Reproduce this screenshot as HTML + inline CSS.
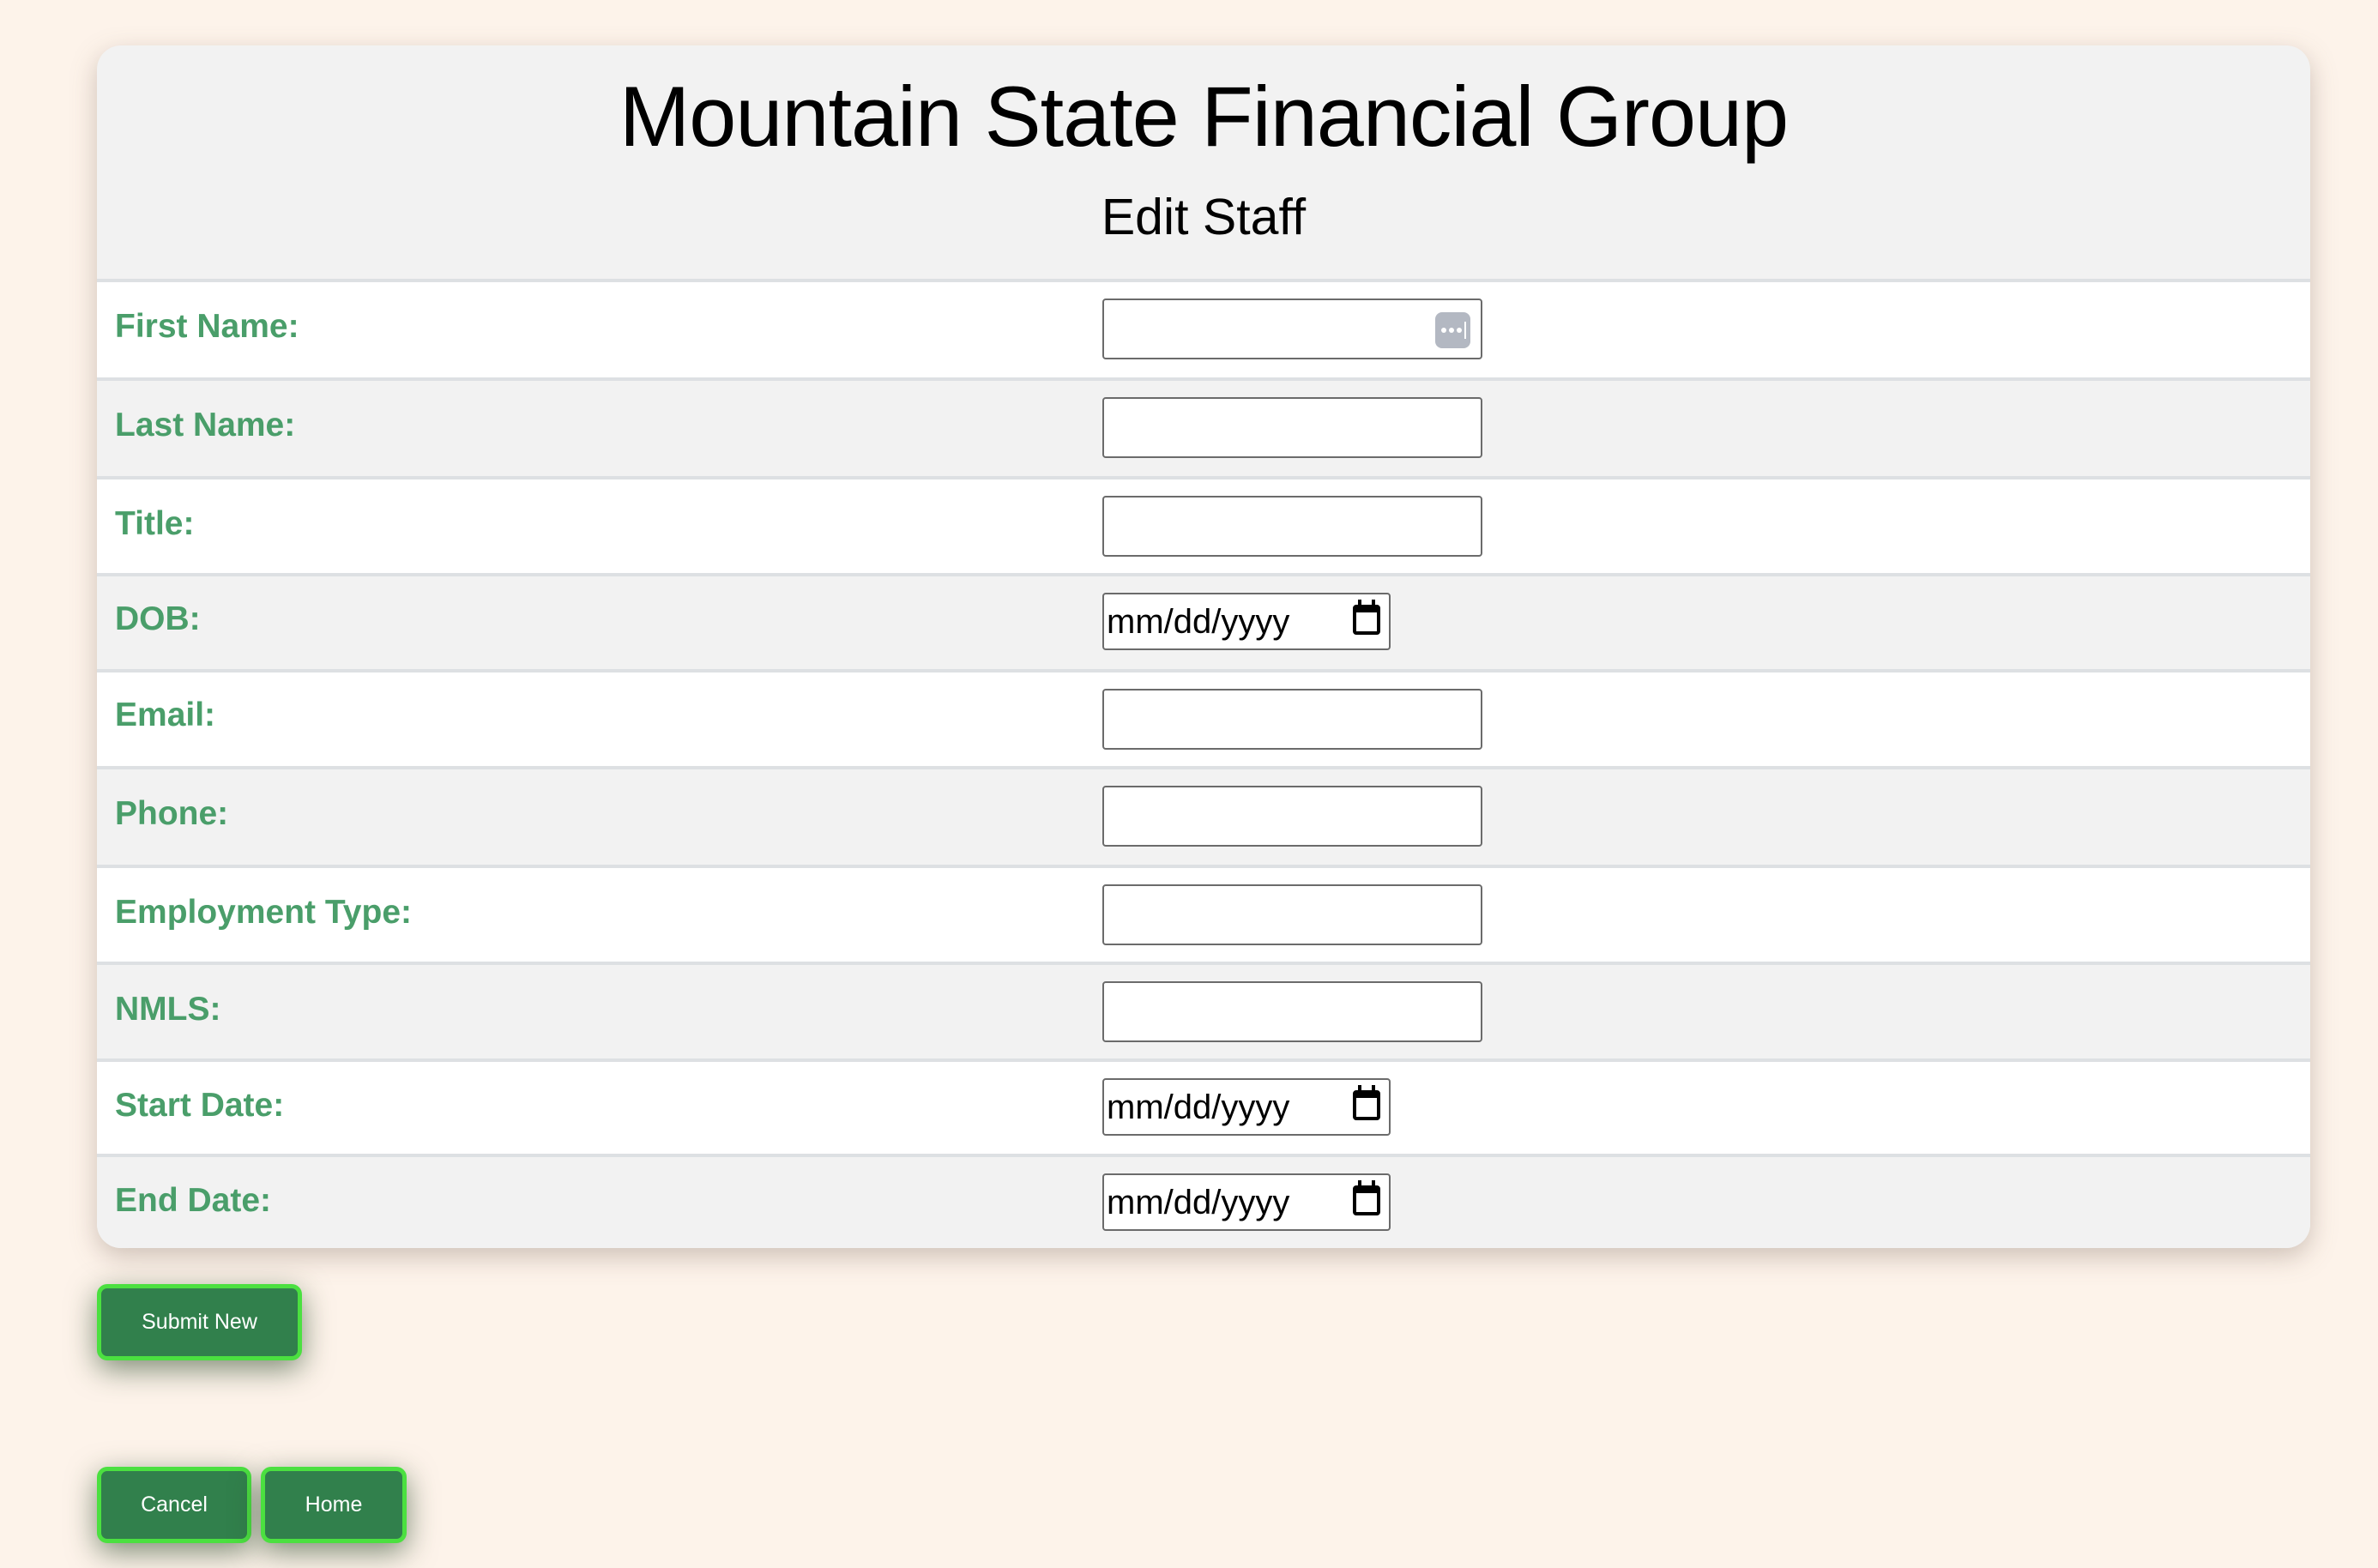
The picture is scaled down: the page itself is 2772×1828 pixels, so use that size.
<!DOCTYPE html>
<html><head><meta charset="utf-8"><style>
*{box-sizing:border-box;margin:0;padding:0}
html,body{width:2772px;height:1828px;overflow:hidden}
body{background:#fdf3ea;font-family:"Liberation Sans",sans-serif;position:relative}
.card{position:absolute;left:113px;top:53px;width:2580px;height:1402px;background:#f2f2f2;border-radius:28px;box-shadow:0 10px 30px rgba(120,100,90,.35);overflow:hidden}
.hdr{height:272px;text-align:center;position:relative}
.h1{position:absolute;left:0;right:0;top:26px;font-size:99px;color:#000;letter-spacing:-1px}
.h2{position:absolute;left:0;right:0;top:166px;font-size:59px;color:#000}
.row{position:absolute;left:0;width:2580px;border-top:4px solid #dde0e3}
.row.w{background:#fff}.row.g{background:#f2f2f2}
.lbl{position:absolute;left:21px;font-weight:bold;font-size:39px;color:#4a9e6a}
.inp{position:absolute;left:1172px;width:443px;height:71px;background:#fff;border:2px solid #6b6b6b;border-radius:4px}
.date{position:absolute;left:1172px;width:336px;height:67px;background:#fff;border:2px solid #6b6b6b;border-radius:4px}
.date span{position:absolute;left:3px;top:10px;font-size:40px;color:#000}
.cal{position:absolute;right:10px;top:12px;width:32px;height:35px;border:4px solid #000;border-top-width:9px;border-radius:4px}
.cal:before,.cal:after{content:"";position:absolute;top:-15px;width:4px;height:8px;background:#000}
.cal:before{left:2px}.cal:after{right:2px}
.key{position:absolute;right:12px;top:14px;width:41px;height:42px;background:#b3b8c2;border-radius:8px}
.key i{position:absolute;top:18px;width:6px;height:6px;border-radius:3px;background:#fff}
.key b{position:absolute;left:34px;top:11px;width:2px;height:20px;background:#fff}
.btn{position:absolute;background:#31804c;border:5px solid #4be040;border-radius:12px;color:#fff;font-size:25px;text-align:center;box-shadow:0 10px 34px rgba(40,70,40,.6)}
</style></head><body>
<div class="card">
<div class="hdr"><div class="h1">Mountain State Financial Group</div><div class="h2">Edit Staff</div></div>

<div class="row w" style="top:272px;height:115px"><div class="lbl" style="top:30px">First Name:</div><div class="inp" style="top:19px"><div class="key"><i style="left:7px"></i><i style="left:16px"></i><i style="left:25px"></i><b></b></div></div></div>
<div class="row g" style="top:387px;height:115px"><div class="lbl" style="top:30px">Last Name:</div><div class="inp" style="top:19px"></div></div>
<div class="row w" style="top:502px;height:113px"><div class="lbl" style="top:30px">Title:</div><div class="inp" style="top:19px"></div></div>
<div class="row g" style="top:615px;height:112px"><div class="lbl" style="top:28px">DOB:</div><div class="date" style="top:19px"><span>mm/dd/yyyy</span><div class="cal"></div></div></div>
<div class="row w" style="top:727px;height:113px"><div class="lbl" style="top:28px">Email:</div><div class="inp" style="top:19px"></div></div>
<div class="row g" style="top:840px;height:115px"><div class="lbl" style="top:30px">Phone:</div><div class="inp" style="top:19px"></div></div>
<div class="row w" style="top:955px;height:113px"><div class="lbl" style="top:30px">Employment Type:</div><div class="inp" style="top:19px"></div></div>
<div class="row g" style="top:1068px;height:113px"><div class="lbl" style="top:30px">NMLS:</div><div class="inp" style="top:19px"></div></div>
<div class="row w" style="top:1181px;height:111px"><div class="lbl" style="top:29px">Start Date:</div><div class="date" style="top:19px"><span>mm/dd/yyyy</span><div class="cal"></div></div></div>
<div class="row g" style="top:1292px;height:112px"><div class="lbl" style="top:29px">End Date:</div><div class="date" style="top:19px"><span>mm/dd/yyyy</span><div class="cal"></div></div></div>
</div>

<div class="btn" style="left:113px;top:1497px;width:239px;height:89px;line-height:79px">Submit New</div>
<div class="btn" style="left:113px;top:1710px;width:180px;height:89px;line-height:79px">Cancel</div>
<div class="btn" style="left:304px;top:1710px;width:170px;height:89px;line-height:79px">Home</div>
</body></html>
